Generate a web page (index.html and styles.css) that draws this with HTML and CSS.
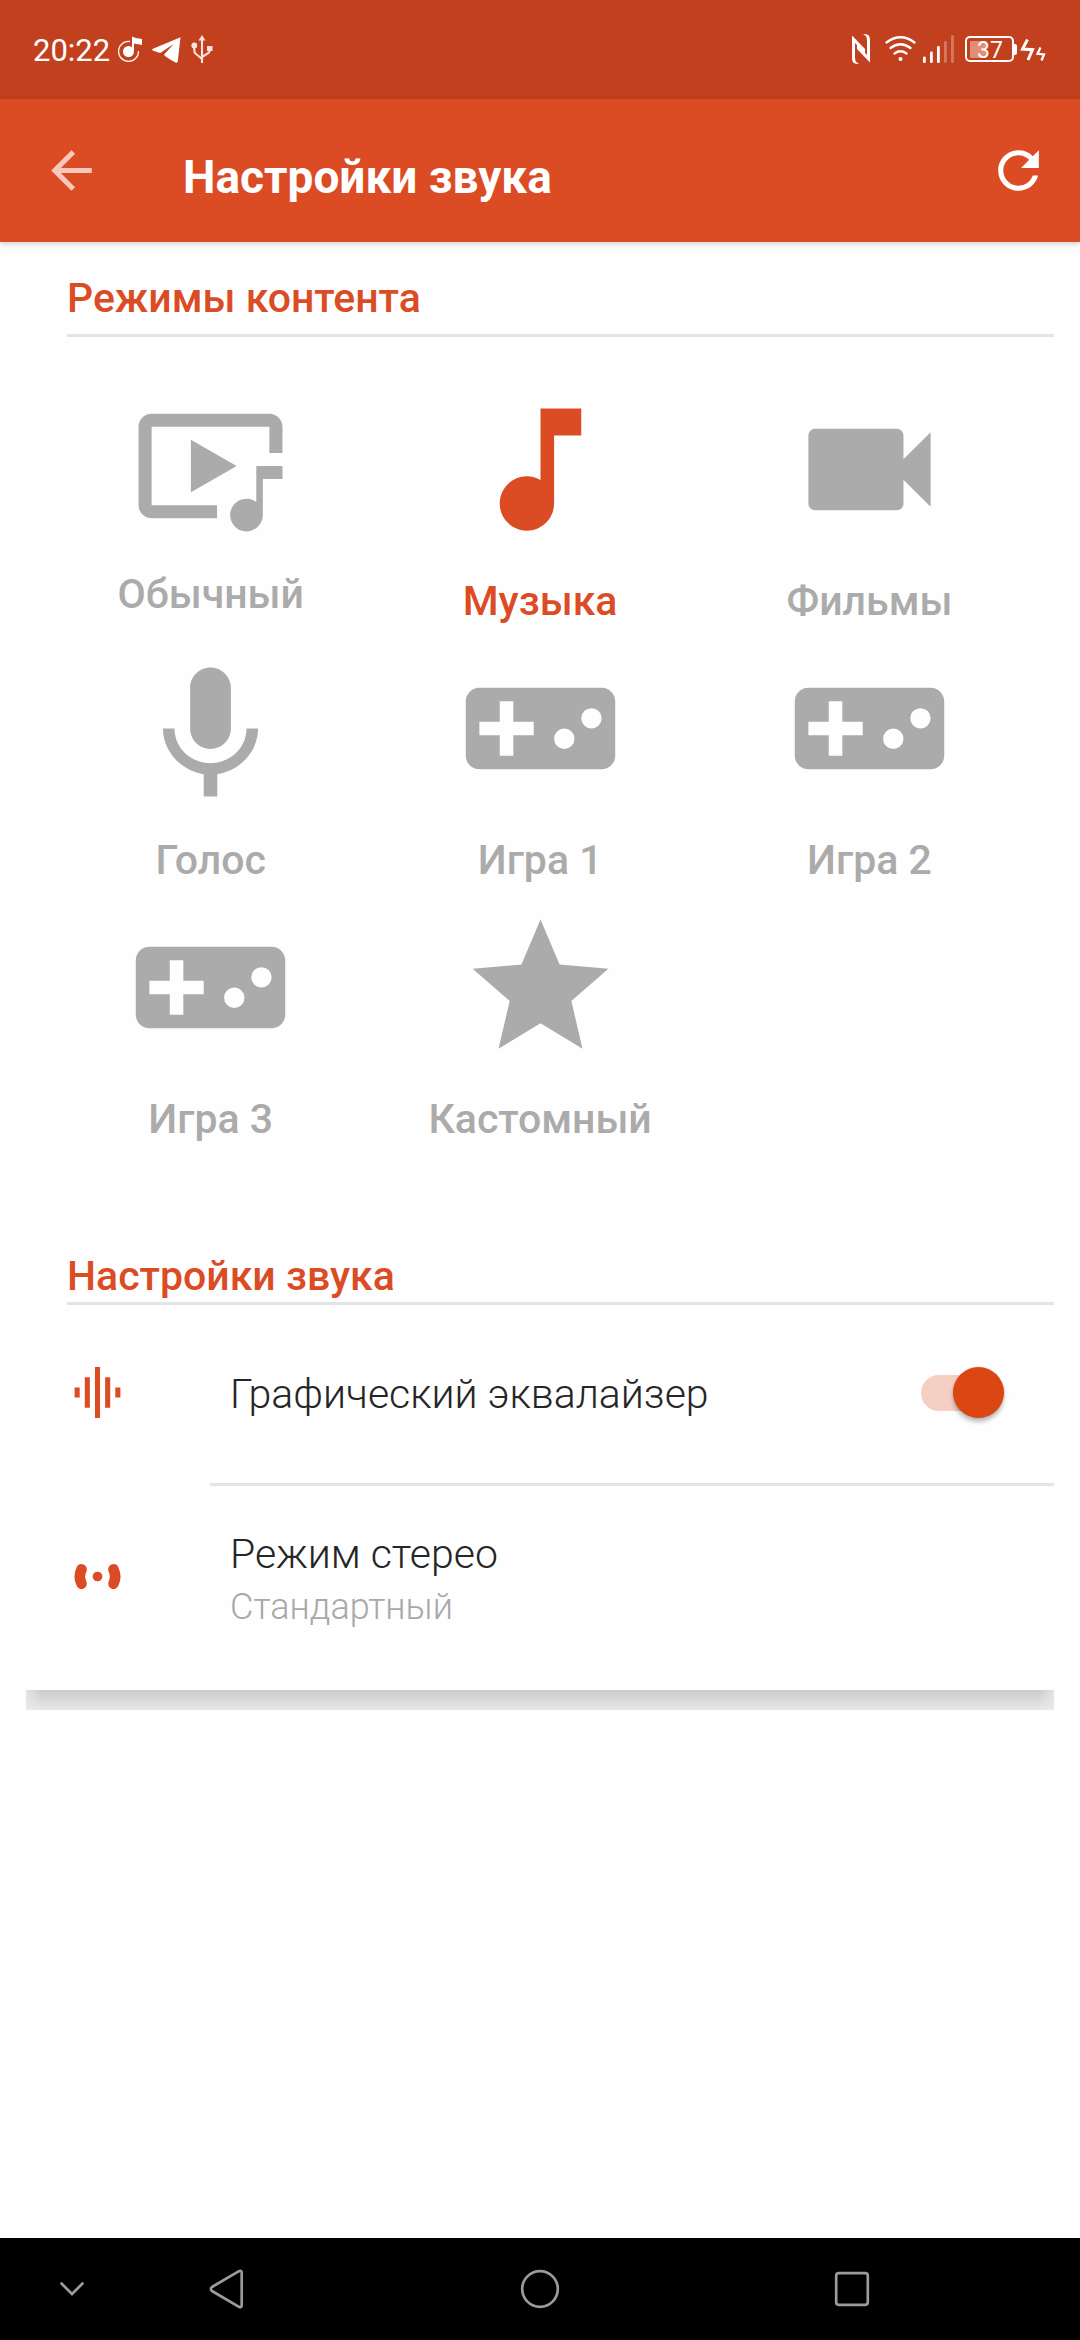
FILE: index.html
```html
<!DOCTYPE html>
<html lang="ru">
<head>
<meta charset="utf-8">
<title>Настройки звука</title>
<link rel="stylesheet" href="styles.css">
</head>
<body>
<div class="screen">
  <div class="statusbar">
    <div class="status-left">
      <span class="clock">20:22</span>
      <svg class="st-music" viewBox="0 0 24 28"><path d="M12 6.500A10 10 0 1 0 20.500 16" fill="none" stroke="#fff" stroke-width="1.300"/><circle cx="10.500" cy="16.500" r="5.500"/><path d="M14 1.500C17 3.500 20 3 24 4v6c-3-.8-5-.8-8-1.500v8h-2z"/></svg>
      <svg class="st-telegram" viewBox="0 0 29 26"><path d="M28.500.2 1 11.800c-1.200.6-1 1.600.2 2l7 2.200L22 6.800 12 17.500c0 1.500 8.500 6.500 11.500 8 1.200.5 2 0 2.300-1.200z"/></svg>
      <svg class="st-usb" viewBox="0 0 22 28"><g fill="none" stroke="#fbe3db" stroke-width="2.100"><path d="M11 4v24M11 24l-6.500-5.500c-1-.8-1.200-1.500-1.200-3V11M11 22l6.500-4c1-.8 1.200-1.500 1.200-3v-2"/></g><g fill="#fbe3db"><path d="M7.500 5.500 11 0l3.500 5.500z"/><circle cx="3.300" cy="10.500" r="2.900"/><path d="M16 11h5.500v5H16z"/></g></svg>
    </div>
    <div class="status-right">
      <svg class="st-nfc" viewBox="0 0 18 30"><path d="M0 1.500 13 15v4.500L3 9v14.500c0 3.500 1 5 4 6.500C2 30 0 28.500 0 24zM18 28.500 5 15v-4.500L15 21V6.500C15 3 14 1.500 11 0c5 0 7 1.500 7 6z"/></svg>
      <svg class="st-wifi" viewBox="0 0 31 26"><g fill="none" stroke="#fff" stroke-width="2.200" stroke-linecap="round"><path d="M1.500 6.500Q15.500-4 29.500 6.500M5.500 12Q15.500 4.500 25.500 12M9.500 17.500Q15.500 13 21.500 17.500"/></g><circle cx="15.500" cy="23" r="2"/></svg>
      <svg class="st-signal" viewBox="0 0 31 28"><rect x="0" y="21.500" width="2.800" height="6.500" rx="1.200"/><rect x="7" y="16.500" width="2.800" height="11.500" rx="1.200"/><rect x="14" y="11" width="2.800" height="17" rx="1.200"/><rect x="21" y="6" width="2.800" height="22" rx="1.200" opacity=".3"/><rect x="28" y="0" width="2.800" height="28" rx="1.200" opacity=".3"/></svg>
      <div class="battery"><div class="battery-shell"><div class="battery-level"></div><span class="battery-text">37</span></div><div class="battery-nub"></div></div>
      <svg class="st-bolts" viewBox="0 0 26 22"><path d="M7.500.5 2.500 10.100l10 .6L8 21" fill="none" stroke="#fff" stroke-width="3"/><path d="M20.500 8.500 17.500 14.800l6.500.6L21.500 21.500" fill="none" stroke="#fff" stroke-width="2.300"/></svg>
    </div>
  </div>

  <header class="appbar">
    <svg class="icon-nav back" viewBox="0 0 24 24"><path d="M20 11H7.830l5.590-5.590L12 4l-8 8 8 8 1.410-1.410L7.830 13H20z"/></svg>
    <h1 class="appbar-title">Настройки звука</h1>
    <svg class="icon-nav" viewBox="0 0 24 24"><path d="M17.650 6.350A7.958 7.958 0 0 0 12 4c-4.420 0-7.990 3.580-7.990 8s3.570 8 7.990 8c3.730 0 6.840-2.550 7.730-6h-2.080A5.990 5.990 0 0 1 12 18c-3.310 0-6-2.690-6-6s2.690-6 6-6c1.660 0 3.140.69 4.220 1.780L13 11h7V4z"/></svg>
  </header>

  <main class="content">
    <div class="card">
      <h2 class="section-title">Режимы контента</h2>
      <div class="modes">
        <div class="mode mode-compact"><svg class="mode-icon" viewBox="0 0 24 24"><path d="M21 3H3c-1.100 0-2 .9-2 2v12c0 1.100.9 2 2 2h10v-2H3V5h18v4h2V5c0-1.100-.9-2-2-2zM9 7v8l7-4zM19 11h4v2h-3v5.500a2.500 2.500 0 1 1-1-2z"/></svg><span class="mode-label">Обычный</span></div>
        <div class="mode active"><svg class="mode-icon" viewBox="0 0 24 24"><path d="M12 3v10.550c-.59-.34-1.270-.55-2-.55-2.210 0-4 1.790-4 4s1.790 4 4 4 4-1.790 4-4V7h4V3z"/></svg><span class="mode-label">Музыка</span></div>
        <div class="mode"><svg class="mode-icon" viewBox="0 0 24 24"><path d="M17 10.500V7c0-.55-.45-1-1-1H4c-.55 0-1 .45-1 1v10c0 .55.45 1 1 1h12c.55 0 1-.45 1-1v-3.500l4 4v-11z"/></svg><span class="mode-label">Фильмы</span></div>
        <div class="mode"><svg class="mode-icon" viewBox="0 -1 24 24"><path d="M12 14c1.660 0 3-1.340 3-3V5c0-1.660-1.340-3-3-3S9 3.340 9 5v6c0 1.660 1.340 3 3 3zm5.300-3c0 3-2.540 5.100-5.300 5.100S6.700 14 6.700 11H5c0 3.410 2.720 6.230 6 6.720V21h2v-3.280c3.280-.48 6-3.300 6-6.720z"/></svg><span class="mode-label">Голос</span></div>
        <div class="mode"><svg class="mode-icon" viewBox="0 0 24 24"><path d="M21 6H3c-1.100 0-2 .9-2 2v8c0 1.100.9 2 2 2h18c1.100 0 2-.9 2-2V8c0-1.100-.9-2-2-2zm-10 7H8v3H6v-3H3v-2h3V8h2v3h3zm4.500 2a1.500 1.500 0 1 1 0-3 1.500 1.500 0 0 1 0 3zm4-3a1.500 1.500 0 1 1 0-3 1.500 1.500 0 0 1 0 3z"/></svg><span class="mode-label">Игра 1</span></div>
        <div class="mode"><svg class="mode-icon" viewBox="0 0 24 24"><path d="M21 6H3c-1.100 0-2 .9-2 2v8c0 1.100.9 2 2 2h18c1.100 0 2-.9 2-2V8c0-1.100-.9-2-2-2zm-10 7H8v3H6v-3H3v-2h3V8h2v3h3zm4.500 2a1.500 1.500 0 1 1 0-3 1.500 1.500 0 0 1 0 3zm4-3a1.500 1.500 0 1 1 0-3 1.500 1.500 0 0 1 0 3z"/></svg><span class="mode-label">Игра 2</span></div>
        <div class="mode"><svg class="mode-icon" viewBox="0 0 24 24"><path d="M21 6H3c-1.100 0-2 .9-2 2v8c0 1.100.9 2 2 2h18c1.100 0 2-.9 2-2V8c0-1.100-.9-2-2-2zm-10 7H8v3H6v-3H3v-2h3V8h2v3h3zm4.500 2a1.500 1.500 0 1 1 0-3 1.500 1.500 0 0 1 0 3zm4-3a1.500 1.500 0 1 1 0-3 1.500 1.500 0 0 1 0 3z"/></svg><span class="mode-label">Игра 3</span></div>
        <div class="mode"><svg class="mode-icon" viewBox="0 0 24 24"><path d="M12 17.270 18.180 21l-1.640-7.030L22 9.240l-7.190-.61L12 2 9.190 8.630 2 9.240l5.460 4.730L5.820 21z"/></svg><span class="mode-label">Кастомный</span></div>
      </div>

      <h2 class="section-title section-sound">Настройки звука</h2>
      <div class="row">
        <svg class="row-icon" viewBox="0 0 24 24"><path d="M7 18h2V6H7zm4 4h2V2h-2zm-8-8h2v-4H3zm12 4h2V6h-2zm4-8v4h2v-4z"/></svg>
        <div class="row-text"><span class="row-title">Графический эквалайзер</span></div>
        <div class="switch"><div class="switch-thumb"></div></div>
      </div>
      <div class="row row-tall">
        <svg class="row-icon" viewBox="0 0 24 24"><circle cx="12" cy="12" r="1.900"/><path d="M5.700 9.200Q4.400 12 5.700 14.800M18.300 9.200Q19.600 12 18.300 14.800" fill="none" stroke="#db4c25" stroke-width="4.200" stroke-linecap="round"/></svg>
        <div class="row-text"><span class="row-title">Режим стерео</span><span class="row-sub">Стандартный</span></div>
      </div>
    </div>
    <div class="card-shadow"></div>
  </main>

  <nav class="navbar">
    <svg class="nav-hide" viewBox="0 0 26 16"><path d="M2.500 2.500l10.500 10.500L23.500 2.500"/></svg>
    <svg class="nav-back" viewBox="0 0 36 42"><path d="M31 3.200 4 19c-1.500 1-1.500 3 0 4l27 15.800c1.500.8 2.700.2 2.700-1.300v-33c0-1.500-1.200-2.100-2.700-1.300z"/></svg>
    <svg class="nav-home" viewBox="0 0 42 42"><circle cx="21" cy="21" r="17.800"/></svg>
    <svg class="nav-recent" viewBox="0 0 38 38"><rect x="3.200" y="3.200" width="31.600" height="31.600" rx="2.500"/></svg>
  </nav>
</div>
</body>
</html>
```
FILE: styles.css
```css
* { box-sizing: border-box; }
body { margin: 0; background: #fefefe; font-family: Roboto, "Noto Sans", sans-serif; }
svg { display: block; flex: none; }
h1, h2 { margin: 0; }

.screen { width: 1080px; height: 2340px; display: flex; flex-direction: column; background: #fefefe; }

.statusbar { height: 99px; flex: none; background: #c2401e; display: flex; justify-content: space-between; padding: 0 34px 0 33px; color: #fff; }
.statusbar svg { fill: #fff; }
.status-left, .status-right { display: flex; align-items: flex-start; }
.clock { width: 76px; margin-right: 9px; padding-top: 30px; font-size: 31px; line-height: 41px; white-space: nowrap; }
.st-music { width: 24px; height: 28px; margin-top: 35px; }
.st-telegram { width: 29px; height: 26px; margin: 37px 0 0 10px; }
.st-usb { width: 22px; height: 28px; margin: 35px 0 0 10px; }
.st-nfc { width: 18px; height: 30px; margin-top: 34px; }
.st-wifi { width: 31px; height: 26px; margin: 36px 0 0 15px; }
.st-signal { width: 31px; height: 28px; margin: 35px 0 0 7px; }
.battery { display: flex; align-items: center; margin: 36px 0 0 11px; }
.battery-shell { width: 49px; height: 26px; border: 2px solid #fff; border-radius: 5px; padding: 2px 3px; display: flex; align-items: center; }
.battery-level { width: 16px; height: 17px; background: #e28d75; border-radius: 1px; }
.battery-text { margin-left: -9px; padding-top: 3px; font-size: 23px; line-height: 22px; }
.battery-nub { width: 3px; height: 11px; background: #fff; border-radius: 0 2px 2px 0; }
.st-bolts { width: 26px; height: 22px; margin: 39px 0 0 3px; }

.appbar { height: 143px; flex: none; background: #db4c25; display: flex; align-items: center; padding: 0 31px 0 41px; box-shadow: 0 2px 6px rgba(0, 0, 0, .18); }
.icon-nav { width: 61px; height: 61px; fill: #fff; }
.back { fill: #f8c9bb; }
.appbar-title { flex: 1; margin-left: 81px; padding-top: 12px; font-size: 46px; line-height: 56px; font-weight: 700; color: #fff; }

.content { flex: 1; padding: 0 26px; }
.card { height: 1448px; }
.section-title { margin-left: 41px; padding: 32px 0 12px; border-bottom: 3px solid #e4e4e4; font-size: 41px; line-height: 48px; font-weight: 500; color: #db4c25; }
.section-sound { padding: 87px 0 2px; }

.modes { display: grid; grid-template-columns: repeat(3, 329.400px); grid-auto-rows: 259px; padding: 51px 0 0 20px; }
.mode { display: flex; flex-direction: column; align-items: center; color: #ababab; }
.mode.active { color: #db4c25; }
.mode-icon { width: 163px; height: 163px; fill: currentColor; }
.mode-label { margin-top: 26px; font-size: 41px; line-height: 48px; font-weight: 500; }
.mode-compact { padding-top: 6px; }
.mode-compact .mode-icon { width: 157px; height: 157px; }
.mode-compact .mode-label { margin-top: 19px; }

.row { height: 178px; display: flex; align-items: center; margin-left: 41px; }
.row-icon { width: 61px; height: 61px; margin-top: -3px; fill: #db4c25; }
.row-text { flex: 1; display: flex; flex-direction: column; margin-left: 102px; font-weight: 300; }
.row-title { font-size: 41px; line-height: 48px; color: #262626; }
.row-sub { margin-top: 8px; font-size: 36px; line-height: 42px; color: #a8a8a8; }
.row-tall { position: relative; height: 207px; align-items: flex-start; padding-top: 47px; }
.row-tall::before { content: ""; position: absolute; left: 143px; right: 0; top: 0; height: 3px; background: #e4e4e4; }
.row-tall .row-icon { margin-top: 16px; }

.switch { width: 83px; height: 36px; margin: -3px 50px 0 0; border-radius: 18px; background: #f6cfc4; display: flex; align-items: center; justify-content: flex-end; }
.switch-thumb { width: 51px; height: 51px; flex: none; border-radius: 50%; background: #da4713; box-shadow: 0 4px 4px rgba(0, 0, 0, .25), 0 0 2px rgba(0, 0, 0, .15); }

.card-shadow { height: 20px; background: linear-gradient(90deg, rgba(233, 233, 233, .8), rgba(233, 233, 233, 0) 16px, rgba(233, 233, 233, 0) calc(100% - 16px), rgba(233, 233, 233, .8)), linear-gradient(#cbcbcb, #e8e8e8); }

.navbar { height: 102px; flex: none; background: #000; display: flex; align-items: center; padding-left: 59px; }
.navbar svg { fill: none; stroke: #9b9b9b; stroke-width: 2.700px; stroke-linecap: round; }
.nav-hide { width: 26px; height: 16px; }
.nav-back { width: 36px; height: 42px; margin-left: 123px; }
.nav-home { width: 42px; height: 42px; margin-left: 275px; }
.nav-recent { width: 38px; height: 38px; margin-left: 272px; }
```
